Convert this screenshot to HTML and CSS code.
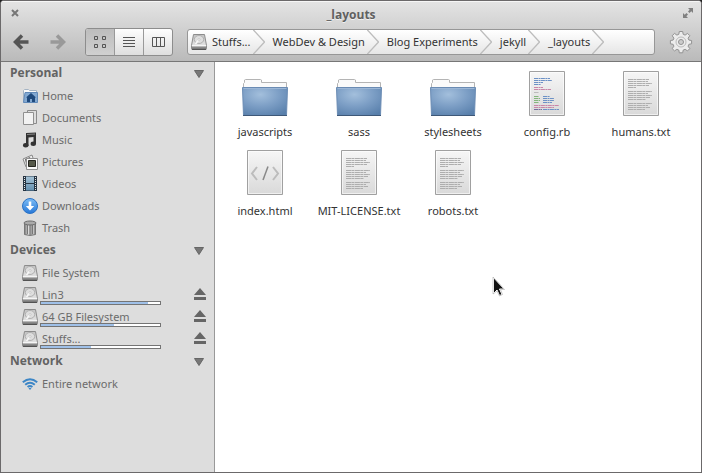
FILE: index.html
```html
<!DOCTYPE html>
<html lang="en">
<head>
<meta charset="utf-8">
<title>_layouts</title>
<link rel="stylesheet" href="styles.css">
</head>
<body>
<svg class="defs" aria-hidden="true">
  <defs>
    <linearGradient id="paper" x1="0" y1="0" x2="0" y2="1"><stop offset="0" stop-color="#f6f6f6"/><stop offset="1" stop-color="#d9d9d9"/></linearGradient>
    <radialGradient id="blue" cx=".4" cy=".25" r=".85"><stop offset="0" stop-color="#a3bfdc"/><stop offset=".5" stop-color="#7c9ec5"/><stop offset="1" stop-color="#587fab"/></radialGradient>
    <linearGradient id="steel" x1="0" y1="0" x2="0" y2="1"><stop offset="0" stop-color="#c2c2c2"/><stop offset="1" stop-color="#eeeeee"/></linearGradient>
    <linearGradient id="globe" x1="0" y1="0" x2="0" y2="1"><stop offset="0" stop-color="#7dbdf5"/><stop offset="1" stop-color="#2677d8"/></linearGradient>
    <linearGradient id="can" x1="0" y1="0" x2="1" y2="0"><stop offset="0" stop-color="#777"/><stop offset=".35" stop-color="#ddd"/><stop offset=".6" stop-color="#999"/><stop offset=".8" stop-color="#ccc"/><stop offset="1" stop-color="#666"/></linearGradient>
    <linearGradient id="film" x1="0" y1="0" x2="0" y2="1"><stop offset="0" stop-color="#a6c3d6"/><stop offset="1" stop-color="#6390b0"/></linearGradient>
  </defs>
  <symbol id="drive" viewBox="0 0 16 16">
    <path d="M2.5.5h11l2 11v3a1 1 0 0 1-1 1h-13a1 1 0 0 1-1-1v-3z" fill="url(#steel)" stroke="#8c8c8c"/>
    <ellipse cx="8" cy="5.5" rx="4.7" ry="4" fill="#dedede" stroke="#b0b0b0"/>
    <path d="M8 5.5 4.5 10" stroke="#f7f7f7" stroke-width="1.5"/>
    <circle cx="8" cy="5.5" r="1" fill="#f8f8f8" stroke="#aaa" stroke-width=".5"/>
    <path d="M.5 12.500h15v2a1 1 0 0 1-1 1h-13a1 1 0 0 1-1-1z" fill="#8a8a8a"/>
    <path d="M1 11.5h14" stroke="#f5f5f5"/>
    <path d="M1 15.3h14" stroke="#444"/>
  </symbol>
  <symbol id="folder" viewBox="0 0 48 48">
    <path d="M2.5 30V14.500l1-1V11l1-.5h15l1 .5v2.500h25v16z" fill="#fafafa" stroke="#b4b4b4"/>
    <path d="M1.500 18.500h45l-1 28h-43z" fill="url(#blue)" stroke="#6a8bb3"/>
    <path d="M2.500 19.500h43" stroke="#9bb6d6"/>
    <path d="M2 46.500h44" stroke="#3e5878"/>
  </symbol>
  <symbol id="sheet" viewBox="0 0 48 48">
    <path d="M6.500 2.500h35v44h-35z" fill="url(#paper)" stroke="#a0a0a0"/>
    <path d="M7.500 3.500h33v42h-33z" fill="none" stroke="#fff" stroke-opacity=".6"/>
  </symbol>
  <symbol id="text" viewBox="0 0 48 48">
    <use href="#sheet"/>
    <path d="M11 10.500h21M11 12.500h20M11 14.500h24M11 16.500h21M11 18.500h8M11 22.500h24M11 24.500h20M11 26.500h24M11 28.500h22M11 30.500h18M11 34.500h24M11 36.500h20M11 38.500h22M11 40.500h17" stroke="#aeaeae" stroke-dasharray="5 .4 3 .5"/>
  </symbol>
  <symbol id="ruby" viewBox="0 0 48 48">
    <use href="#sheet"/>
    <g stroke-dasharray="4 .5 2 .4">
      <path d="M11 9.500h16M11 11.500h18M11 13.500h9M11 15.500h7M20 27.500h7M20 29.500h11M20 31.500h11M20 33.500h9M20 40.500h16" stroke="#6c91c6"/>
      <path d="M11 18.500h9M11 20.500h17M11 36.500h25M11 38.500h20" stroke="#c986a8"/>
      <path d="M11 23.500h5" stroke="#bbb"/>
      <path d="M11 27.500h5M11 29.500h6M11 31.500h6M11 33.500h5" stroke="#84b77c"/>
      <path d="M11 40.500h8" stroke="#746f9c"/>
    </g>
  </symbol>
  <symbol id="markup" viewBox="0 0 48 48">
    <use href="#sheet"/>
    <path d="m16 19-5 6.500 5 6.500M32 19l5 6.500-5 6.500" fill="none" stroke="#bcbcbc" stroke-width="2"/>
    <path d="m27 18.500-5 13.500" stroke="#888" stroke-width="1.500"/>
  </symbol>
  <symbol id="chevron" viewBox="0 0 12 24"><path d="m0-.5 11.500 12.500L0 24.500" fill="none" stroke="#bdbdbd" stroke-width="1.300"/></symbol>
  <symbol id="eject" viewBox="0 0 12 14"><path d="M6 0l6 7H0zM0 9h12v3H0z"/></symbol>
  <symbol id="down" viewBox="0 0 10 10"><path d="M.5 2.500h9L5 9.500z" stroke="#666"/></symbol>
</svg>

<div class="window">
  <header class="header">
    <div class="titlebar">
      <button class="plain" aria-label="Close"><svg width="8" height="8" viewBox="0 0 8 8"><path d="m1 1 6 6M7 1 1 7" stroke="#777" stroke-width="2"/></svg></button>
      <h1 class="title">_layouts</h1>
      <button class="plain" aria-label="Maximize"><svg width="10" height="10" viewBox="0 0 10 10" fill="#808080"><path d="M5 0h5v5L8.300 3.300 6.500 5 5 3.500l1.700-1.800zM0 5l1.700 1.700L3.500 5 5 6.500 3.300 8.300 5 10H0z"/></svg></button>
    </div>
    <div class="toolbar">
      <div class="history">
        <button class="plain" aria-label="Back"><svg width="16" height="16" viewBox="0 0 16 16" fill="none" stroke="#555" stroke-width="3.500"><path d="M9 1.500 2.500 8 9 14.500M3 8h12.500"/></svg></button>
        <button class="plain" aria-label="Forward"><svg width="16" height="16" viewBox="0 0 16 16" fill="none" stroke="#999" stroke-width="3.500"><path d="M7 1.500 13.500 8 7 14.500M13 8H.5"/></svg></button>
      </div>
      <div class="views">
        <button class="view active" aria-label="Icon view" aria-pressed="true"><svg width="14" height="14" viewBox="0 0 14 14" fill="none" stroke="#555"><path d="M1.500 1.500h3v3h-3zM9.500 1.500h3v3h-3zM1.500 9.500h3v3h-3zM9.500 9.500h3v3h-3z"/></svg></button>
        <button class="view" aria-label="List view"><svg width="12" height="12" viewBox="0 0 12 12" stroke="#555"><path d="M0 1.500h12M0 4.500h12M0 7.500h12M0 10.500h12"/></svg></button>
        <button class="view" aria-label="Column view"><svg width="13" height="12" viewBox="0 0 13 12" fill="none" stroke="#555"><path d="M.5 1.500h12v9H.5zM4.500 1.500v9M8.500 1.500v9"/></svg></button>
      </div>
      <nav class="path" aria-label="Path">
        <button class="crumb"><svg class="icon"><use href="#drive"/></svg>Stuffs...</button><svg class="chevron"><use href="#chevron"/></svg>
        <button class="crumb">WebDev &amp; Design</button><svg class="chevron"><use href="#chevron"/></svg>
        <button class="crumb">Blog Experiments</button><svg class="chevron"><use href="#chevron"/></svg>
        <button class="crumb">jekyll</button><svg class="chevron"><use href="#chevron"/></svg>
        <button class="crumb">_layouts</button><svg class="chevron"><use href="#chevron"/></svg>
      </nav>
      <button class="plain" aria-label="Settings"><svg width="24" height="24" viewBox="0 0 24 24" fill="#ececec" stroke="#929292"><path d="M10.300 1.500h3.400l.5 2.800 1.900.8 2.400-1.700 2.300 2.300-1.700 2.500.8 1.900 2.700.4v3.300l-2.700.5-.8 1.900 1.700 2.400-2.300 2.300-2.400-1.600-1.900.8-.5 2.700h-3.400l-.5-2.700-1.900-.8-2.400 1.600-2.300-2.300 1.700-2.400-.8-1.900-2.700-.5v-3.300l2.700-.4.8-1.900-1.700-2.500 2.300-2.300 2.400 1.700 1.900-.8z"/><circle cx="12" cy="12" r="5" fill="none" stroke="#bbb"/><circle cx="12" cy="12" r="2.500" fill="#ccc"/></svg></button>
    </div>
  </header>

  <div class="body">
    <aside class="sidebar">
      <section>
        <h2><button class="heading">Personal<svg class="down"><use href="#down"/></svg></button></h2>
        <ul>
          <li class="row"><a class="place" href="#home"><svg class="icon" viewBox="0 0 16 16"><path d="M1.500 14V2.500l1-1h4l1 1h7V14z" fill="#fafafa" stroke="#a5b4c4"/><path d="M3 4.500h12.500v10h-14z" fill="#83a9d2" stroke="#6089b8"/><path d="m9 5 5 4.500h-1V14h-3v-3H8v3H5V9.500H4z" fill="#1f4a7d"/></svg>Home</a></li>
          <li class="row"><a class="place" href="#documents"><svg class="icon" viewBox="0 0 16 16"><path d="M5.500.5h9v13h-9z" fill="#ddd" stroke="#8b8b8b"/><path d="M1.500 2.500h10v12h-10z" fill="#f2f2f2" stroke="#909090"/></svg>Documents</a></li>
          <li class="row"><a class="place" href="#music"><svg class="icon" viewBox="0 0 16 16"><path d="M4 1 14 .5V12h-2.500V5L6.500 5.500V14H4z" fill="#333"/><ellipse cx="3.700" cy="13.200" rx="2.700" ry="2.200" fill="#333"/><ellipse cx="11.300" cy="11.800" rx="2.700" ry="2.200" fill="#333"/><path d="M5 2.500 13 2" stroke="#888"/></svg>Music</a></li>
          <li class="row"><a class="place" href="#pictures"><svg class="icon" viewBox="0 0 16 16"><path d="m1 5 9-4 2 6-8 6z" fill="#ededed" stroke="#888"/><path d="m3 5 5-2 1 5-5 2z" fill="#666"/><path d="M4.500 4.500h11v11h-11z" fill="#fafafa" stroke="#909090"/><path d="M6.500 6.500h7v6h-7z" fill="#56594a" stroke="#25251f"/></svg>Pictures</a></li>
          <li class="row"><a class="place" href="#videos"><svg class="icon" viewBox="0 0 16 16"><path d="M1 0h14v15H1z" fill="#263543"/><path d="M4 .5h8V7H4zM4 8h8v6.500H4z" fill="url(#film)"/><path d="M2.500 1v13M13.500 1v13" stroke="#e6e6e6" stroke-dasharray="1 1"/></svg>Videos</a></li>
          <li class="row"><a class="place" href="#downloads"><svg class="icon" viewBox="0 0 16 16"><circle cx="8" cy="8" r="7.500" fill="url(#globe)" stroke="#2b72c4"/><path d="M6.700 3.500h2.600V8h2.900L8 12.500 3.800 8h2.900z" fill="#fff"/></svg>Downloads</a></li>
          <li class="row"><a class="place" href="#trash"><svg class="icon" viewBox="0 0 16 16"><path d="M2.500 3h11v11.500q-5.500 2-11 0z" fill="url(#can)" stroke="#777"/><path d="M5.500 5v9M8 5v10M10.500 5v9" stroke="#777"/><ellipse cx="8" cy="3" rx="6" ry="2" fill="#aaa" stroke="#6c6c6c"/></svg>Trash</a></li>
        </ul>
      </section>
      <section>
        <h2><button class="heading">Devices<svg class="down"><use href="#down"/></svg></button></h2>
        <ul>
          <li class="row"><a class="place" href="#root"><svg class="icon"><use href="#drive"/></svg>File System</a></li>
          <li class="row"><a class="place" href="#lin3"><svg class="icon"><use href="#drive"/></svg>Lin3</a><span class="usage"><span class="used" style="width:90%"></span></span><button class="plain" aria-label="Eject Lin3"><svg class="eject"><use href="#eject"/></svg></button></li>
          <li class="row"><a class="place" href="#fs64"><svg class="icon"><use href="#drive"/></svg>64 GB Filesystem</a><span class="usage"><span class="used" style="width:61%"></span></span><button class="plain" aria-label="Eject 64 GB Filesystem"><svg class="eject"><use href="#eject"/></svg></button></li>
          <li class="row"><a class="place" href="#stuffs"><svg class="icon"><use href="#drive"/></svg>Stuffs...</a><span class="usage"><span class="used" style="width:42%"></span></span><button class="plain" aria-label="Eject Stuffs"><svg class="eject"><use href="#eject"/></svg></button></li>
        </ul>
      </section>
      <section>
        <h2><button class="heading">Network<svg class="down"><use href="#down"/></svg></button></h2>
        <ul>
          <li class="row"><a class="place" href="#network"><svg class="icon" viewBox="0 0 16 16" fill="none" stroke="#3d86c6" stroke-width="2"><path d="M.8 6.200q7.200-6 14.400 0M3.200 8.700q4.800-4 9.600 0M5.600 11q2.400-2 4.800 0"/><path d="m6.500 12.200 1.500 1.800 1.500-1.800q-1.500-1-3 0z" fill="#3d86c6" stroke="none"/></svg>Entire network</a></li>
        </ul>
      </section>
    </aside>

    <main class="files">
      <button class="file"><svg class="thumb"><use href="#folder"/></svg>javascripts</button>
      <button class="file"><svg class="thumb"><use href="#folder"/></svg>sass</button>
      <button class="file"><svg class="thumb"><use href="#folder"/></svg>stylesheets</button>
      <button class="file"><svg class="thumb"><use href="#ruby"/></svg>config.rb</button>
      <button class="file"><svg class="thumb"><use href="#text"/></svg>humans.txt</button>
      <button class="file"><svg class="thumb"><use href="#markup"/></svg>index.html</button>
      <button class="file"><svg class="thumb"><use href="#text"/></svg>MIT-LICENSE.txt</button>
      <button class="file"><svg class="thumb"><use href="#text"/></svg>robots.txt</button>
    </main>
  </div>
</div>
<svg class="pointer" viewBox="0 0 14 21" aria-hidden="true"><path d="M1.500 1.500v16l3.500-3.500 2.500 5.500 2.500-1-2.500-5.500h4.500z" fill="#111" stroke="#fff"/><path d="M1 1v17l4-3 2.500 5 3-1.500-2-5h4z" fill="none" stroke="#999" stroke-width=".5"/></svg>
</body>
</html>
```
FILE: styles.css
```css
* { box-sizing: border-box; }

body {
  margin: 0;
  background: #222;
  color: #333;
  font: 11px/16px "Noto Sans", "Open Sans", sans-serif;
}

svg { display: block; flex: none; }
button { font: inherit; color: inherit; border: 0; background: none; padding: 0; margin: 0; }
h1, h2, ul { margin: 0; padding: 0; font: inherit; list-style: none; }
a { color: inherit; text-decoration: none; }

.defs { position: absolute; width: 0; height: 0; }
.icon { width: 16px; height: 16px; }

.window {
  display: flex;
  flex-direction: column;
  min-height: 100vh;
  border: 1px solid #6b696a;
  border-radius: 4px 4px 0 0;
  background: #fff;
  overflow: hidden;
}

.header {
  border-bottom: 1px solid #777;
  background: linear-gradient(#e4e4e4, #bababa);
  box-shadow: inset 0 1px #f6f6f6;
}

.titlebar {
  display: flex;
  align-items: center;
  justify-content: space-between;
  height: 24px;
  padding: 0 8px 0 10px;
}
.title, .heading { font: bold 12px/16px "Open Sans", "Noto Sans", sans-serif; }
.title { color: #606060; text-shadow: 0 1px #f0f0f0; padding-top: 4px; }

.toolbar {
  display: flex;
  align-items: center;
  height: 36px;
  padding: 0 8px 2px 12px;
  gap: 14px;
}
.history { display: flex; gap: 21px; padding-right: 5px; }

.views {
  display: flex;
  height: 28px;
  border: 1px solid #8d8d8d;
  border-radius: 3px;
  background: linear-gradient(#fdfdfd, #dedede);
  overflow: hidden;
}
.view { display: grid; place-items: center; width: 29px; }
.view + .view { border-left: 1px solid #999; }
.view.active { width: 28px; background: linear-gradient(#bdbdbd, #d0d0d0); }

.path {
  display: flex;
  align-items: center;
  flex: 1;
  height: 26px;
  border: 1px solid #979797;
  border-radius: 3px;
  background: linear-gradient(#fff, #e6e6e6);
}
.crumb { display: flex; align-items: center; gap: 5px; padding: 0 2px 0 8px; white-space: nowrap; }
.crumb:first-child { padding-left: 3px; }
.chevron { width: 12px; height: 24px; }

.body { display: flex; flex: 1; }

.sidebar {
  flex: none;
  width: 214px;
  border-right: 1px solid #999;
  background: #ddd;
  color: #6b6b6b;
}
.heading {
  display: flex;
  align-items: center;
  justify-content: space-between;
  width: 100%;
  height: 22px;
  padding: 0 10px 0 9px;
  margin-bottom: 1px;
  color: #636363;
}
.down { width: 10px; height: 10px; fill: #777; }

.row {
  position: relative;
  display: flex;
  align-items: center;
  height: 22px;
  padding: 0 8px 0 21px;
}
.place { display: flex; align-items: center; flex: 1; gap: 4px; }
.usage {
  position: absolute;
  left: 39px;
  bottom: 1px;
  width: 121px;
  height: 4px;
  border: 1px solid #747474;
  background: #fff;
}
.used { display: block; height: 100%; background: #9fc0e8; }
.eject { width: 12px; height: 14px; fill: #666; }

.files {
  flex: 1;
  display: grid;
  grid-template-columns: repeat(auto-fill, 94px);
  align-content: start;
  row-gap: 8px;
  padding: 7px 3px;
}
.file { display: flex; flex-direction: column; align-items: center; gap: 7px; white-space: nowrap; }
.thumb { width: 48px; height: 48px; }

.pointer { position: absolute; left: 492px; top: 276px; width: 14px; height: 21px; }
```
